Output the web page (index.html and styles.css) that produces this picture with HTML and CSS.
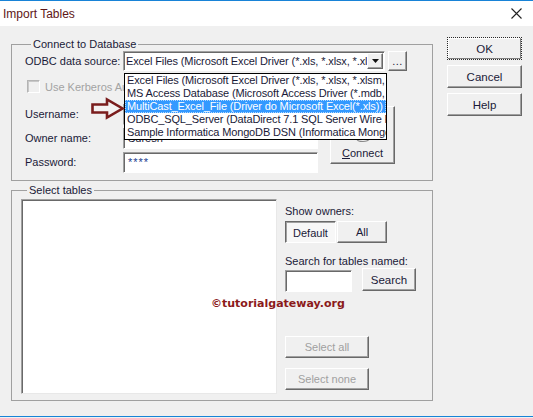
FILE: index.html
```html
<!DOCTYPE html>
<html>
<head>
<meta charset="utf-8">
<title>Import Tables</title>
<link rel="stylesheet" href="styles.css">
</head>
<body>
<div class="window">
  <div class="titlebar">
    <span class="title">Import Tables</span>
    <svg class="close" width="11" height="11" viewBox="0 0 11 11"><path d="M0.5 0.5 L10.5 10.5 M10.5 0.5 L0.5 10.5" stroke="#222" stroke-width="1.1" fill="none"/></svg>
  </div>
  <div class="dialog">
    <div class="main">
      <div class="frame frame-connect">
        <span class="legend">Connect to Database</span>
        <div class="row-odbc">
          <span class="label">ODBC data source:</span>
          <div class="combo">
            <span class="combo-text">Excel Files (Microsoft Excel Driver (*.xls, *.xlsx, *.xlsm, *.xlsb))</span>
            <span class="combo-arrow"><svg width="7" height="4" viewBox="0 0 7 4"><path d="M0 0 H7 L3.5 4 Z" fill="#111"/></svg></span>
            <ul class="dropdown">
              <li>Excel Files (Microsoft Excel Driver (*.xls, *.xlsx, *.xlsm, *.xlsb))</li>
              <li>MS Access Database (Microsoft Access Driver (*.mdb, *.accdb))</li>
              <li class="selected">MultiCast_Excel_File (Driver do Microsoft Excel(*.xls))</li>
              <li>ODBC_SQL_Server (DataDirect 7.1 SQL Server Wire Protocol)</li>
              <li>Sample Informatica MongoDB DSN (Informatica MongoDB ODBC Driver)</li>
            </ul>
          </div>
          <button class="btn btn-dots">...</button>
        </div>
        <div class="row-check">
          <span class="checkbox"></span>
          <span class="check-label">Use Kerberos Authentication</span>
        </div>
        <div class="credentials">
          <div class="fields">
            <div class="field-row"><span class="label">Username:</span><span class="input"></span></div>
            <div class="field-row"><span class="label">Owner name:</span><span class="input">Suresh</span></div>
            <div class="field-row"><span class="label">Password:</span><span class="input input-pass">****</span></div>
          </div>
          <button class="btn btn-connect">
            <svg class="db-icon" width="16" height="20" viewBox="0 0 16 20"><path d="M2 15 A6 2.5 0 0 0 14 15" fill="none" stroke="#8a8a8a" stroke-width="1.2"/></svg>
            <span><u>C</u>onnect</span>
          </button>
        </div>
      </div>
      <div class="frame frame-tables">
        <span class="legend">Select tables</span>
        <div class="tables-body">
          <div class="listbox"></div>
          <div class="side">
            <span class="side-label">Show owners:</span>
            <div class="owner-btns">
              <button class="btn btn-pressed btn-default">Default</button>
              <button class="btn btn-all">All</button>
            </div>
            <span class="side-label search-label">Search for tables named:</span>
            <div class="search-row">
              <span class="input search-input"></span>
              <button class="btn btn-search">Search</button>
            </div>
            <button class="btn btn-disabled btn-select-all">Select all</button>
            <button class="btn btn-disabled btn-select-none">Select none</button>
          </div>
        </div>
      </div>
    </div>
    <div class="actions">
      <button class="btn btn-ok">OK</button>
      <button class="btn">Cancel</button>
      <button class="btn">Help</button>
    </div>
  </div>
  <svg class="pointer" width="40" height="26" viewBox="0 0 40 26"><path d="M4.5 8.5 H19 V3.5 L34.5 12.5 L19 21.5 V16.5 H4.5 Z" fill="#f4f2f2" stroke="#7a1d1d" stroke-width="2.6" stroke-linejoin="miter"/></svg>
  <span class="watermark">©tutorialgateway.org</span>
</div>
</body>
</html>
```
FILE: styles.css
```css
* { box-sizing: border-box; }
html, body { margin: 0; padding: 0; }
body {
  width: 533px;
  height: 418px;
  overflow: hidden;
  background: #f0f0f0;
  font-family: "Liberation Sans", Arial, sans-serif;
  font-size: 11px;
  color: #1a1a38;
}
.window {
  position: relative;
  width: 533px;
  height: 417px;
  border-top: 1px solid #1883d7;
  border-bottom: 1px solid #1883d7;
  background: #f0f0f0;
}
.titlebar {
  height: 25px;
  background: #ffffff;
  display: flex;
  align-items: center;
  justify-content: space-between;
  padding: 0 11px 0 3px;
}
.title {
  font-size: 12px;
  color: #5e1616;
}
.close { display: block; }
.dialog {
  display: flex;
  align-items: flex-start;
  padding: 11px 0 0 11px;
  gap: 14px;
}
.main {
  width: 422px;
  padding-top: 7px;
}
.frame {
  border: 1px solid #a0a0a0;
}
.legend {
  display: table;
  margin: -7px 0 0 6px;
  padding: 0 2px;
  background: #f0f0f0;
  line-height: 13px;
}
.frame-connect {
  padding: 0 0 7px 13px;
}
.label {
  width: 98px;
  flex: none;
  line-height: 13px;
}
.row-odbc {
  display: flex;
  align-items: center;
  height: 20px;
}
.combo {
  position: relative;
  width: 262px;
  height: 20px;
  background: #fff;
  border: 1px solid;
  border-color: #a0a0a0 #ffffff #ffffff #a0a0a0;
  box-shadow: inset 1px 1px #696969;
  display: flex;
  align-items: center;
}
.combo-text {
  flex: 1;
  overflow: hidden;
  white-space: nowrap;
  padding-left: 2px;
  line-height: 13px;
  letter-spacing: -0.12px;
}
.combo-arrow {
  width: 16px;
  height: 16px;
  margin-right: 1px;
  flex: none;
  display: flex;
  align-items: center;
  justify-content: center;
  background: #f0f0f0;
  border: 1px solid;
  border-color: #ffffff #696969 #696969 #ffffff;
  box-shadow: inset -1px -1px #a0a0a0;
}
.dropdown {
  position: absolute;
  top: 21px;
  left: 0;
  width: 263px;
  height: 67px;
  margin: 0;
  padding: 0;
  list-style: none;
  background: #fff;
  border: 1px solid #000;
  z-index: 5;
}
.dropdown li {
  height: 13px;
  line-height: 13px;
  padding-left: 2px;
  white-space: nowrap;
  overflow: hidden;
  color: #1a1a38;
  letter-spacing: -0.14px;
}
.dropdown li.selected {
  background: #3399ff;
  color: #fff;
  outline: 1px dotted #b0d8ff;
  outline-offset: -1px;
}
.btn {
  background: #f0f0f0;
  border: 1px solid;
  border-color: #ffffff #696969 #696969 #ffffff;
  box-shadow: inset -1px -1px #a0a0a0;
  font-family: "Liberation Sans", Arial, sans-serif;
  font-size: 11px;
  color: #1a1a38;
  padding: 0;
  margin: 0;
  display: flex;
  align-items: center;
  justify-content: center;
}
.btn-dots {
  width: 19px;
  height: 20px;
  margin-left: 3px;
  align-items: flex-start;
  padding-top: 3px;
  letter-spacing: 0.5px;
}
.row-check {
  display: flex;
  align-items: center;
  margin-top: 9px;
  padding-left: 2px;
  height: 13px;
}
.checkbox {
  width: 13px;
  height: 13px;
  border: 1px solid;
  border-color: #b4b4b4 #ffffff #ffffff #b4b4b4;
  box-shadow: inset 1px 1px #c8c8c8;
  background: #f0f0f0;
}
.check-label {
  margin-left: 5px;
  color: #a3a3a3;
  white-space: nowrap;
}
.credentials {
  display: flex;
  align-items: flex-start;
  margin-top: 11px;
}
.fields {
  display: flex;
  flex-direction: column;
  gap: 3px;
}
.field-row {
  display: flex;
  align-items: center;
  height: 21px;
}
.input {
  display: flex;
  align-items: center;
  width: 195px;
  height: 21px;
  background: #fff;
  border: 1px solid;
  border-color: #a0a0a0 #ffffff #ffffff #a0a0a0;
  box-shadow: inset 1px 1px #696969;
  padding-left: 4px;
  line-height: 13px;
}
.input-pass {
  color: #21408f;
  letter-spacing: 1px;
}
.btn-connect {
  width: 65px;
  height: 58px;
  margin: 2px 0 0 12px;
  flex-direction: column;
  justify-content: flex-end;
  padding-bottom: 4px;
  gap: 3px;
}
.db-icon { display: block; }
.frame-tables {
  margin-top: 9px;
  padding: 0 0 6px 9px;
}
.tables-body {
  display: flex;
  align-items: flex-start;
  margin-top: 2px;
}
.listbox {
  width: 256px;
  height: 195px;
  background: #fff;
  border: 1px solid;
  border-color: #a0a0a0 #e8e8e8 #e8e8e8 #a0a0a0;
  box-shadow: inset 1px 1px #696969;
}
.side {
  display: flex;
  flex-direction: column;
  align-items: flex-start;
  margin-left: 8px;
}
.side-label {
  line-height: 13px;
  margin-top: 6px;
}
.owner-btns {
  display: flex;
  gap: 1px;
  margin-top: 3px;
}
.btn-default { width: 51px; height: 22px; }
.btn-all { width: 50px; height: 22px; }
.btn-pressed {
  background: #f7f7f7;
  border-color: #696969 #ffffff #ffffff #696969;
  box-shadow: inset 1px 1px #a0a0a0;
  padding-top: 2px;
}
.search-label { margin-top: 12px; }
.search-row {
  display: flex;
  align-items: flex-start;
  gap: 10px;
  margin-top: 0;
}
.search-input {
  width: 67px;
  height: 22px;
  margin-top: 2px;
}
.btn-search { width: 54px; height: 23px; font-size: 11.5px; }
.btn-disabled {
  width: 84px;
  height: 22px;
  color: #a0a0a0;
}
.btn-select-all { margin-top: 44px; }
.btn-select-none { margin-top: 10px; }
.actions {
  display: flex;
  flex-direction: column;
  gap: 5px;
}
.actions .btn {
  width: 75px;
  height: 23px;
  font-size: 11.5px;
}
.actions .btn-ok {
  border: 1px dotted #2a2a2a;
  box-shadow: inset -1px -1px #808080, inset 1px 1px #ffffff;
}
.pointer {
  position: absolute;
  left: 88px;
  top: 95px;
  z-index: 6;
}
.watermark {
  position: absolute;
  left: 211px;
  top: 296px;
  font-family: "DejaVu Sans", Verdana, sans-serif;
  font-weight: bold;
  font-size: 11px;
  color: #8b1a1a;
  line-height: 13px;
}
```
